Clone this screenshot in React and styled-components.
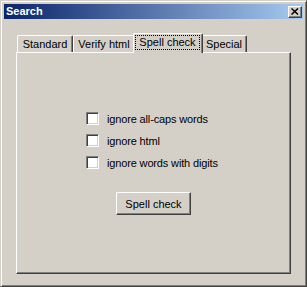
import React, { useState } from 'react';
import styled, { createGlobalStyle } from 'styled-components';

const GlobalStyle = createGlobalStyle`
  html, body {
    margin: 0;
    padding: 0;
    background: #d4d0c8;
  }
  body {
    font-family: "Liberation Sans", Arial, sans-serif;
    font-size: 11px;
    color: #000;
  }
`;

// outer dialog frame, classic 3d look
const Window = styled.div`
  box-sizing: border-box;
  width: 307px;
  height: 287px;
  background: #d4d0c8;
  border: 1px solid;
  border-color: #d4d0c8 #404040 #404040 #d4d0c8;
  box-shadow: inset 1px 1px #fff, inset -1px -1px #808080;
  padding: 3px;
  display: flex;
  flex-direction: column;
`;

const TitleBar = styled.div`
  height: 15px;
  display: flex;
  align-items: center;
  justify-content: space-between;
  padding: 0 1px 0 2px;
  background: linear-gradient(to right, #0a246a, #a6caf0);
`;

const Title = styled.span`
  color: #fff;
  font-weight: bold;
  font-size: 11px;
  line-height: 15px;
`;

const CloseButton = styled.button`
  box-sizing: border-box;
  width: 14px;
  height: 12px;
  padding: 0;
  background: #d4d0c8;
  border: 1px solid;
  border-color: #fff #404040 #404040 #fff;
  box-shadow: inset -1px -1px #808080;
  display: flex;
  align-items: center;
  justify-content: center;
`;

const Body = styled.div`
  flex: 1;
  display: flex;
  flex-direction: column;
  padding: 14px 12px 9px 12px;
`;

const TabRow = styled.div`
  display: flex;
  align-items: flex-start;
  height: 19px;
  padding-left: 1px;
  position: relative;
  z-index: 1;
`;

const Tab = styled.div`
  box-sizing: border-box;
  width: ${p => p.$w}px;
  height: ${p => (p.$active ? 20 : 17)}px;
  margin-top: ${p => (p.$active ? 0 : 2)}px;
  margin-left: ${p => (p.$active ? -2 : 0)}px;
  margin-right: ${p => (p.$active ? -2 : 0)}px;
  background: #d4d0c8;
  border-top: 1px solid #fff;
  border-left: 1px solid #fff;
  border-right: 1px solid #404040;
  border-radius: 2px 2px 0 0;
  box-shadow: inset -1px 0 #808080;
  display: flex;
  align-items: flex-start;
  justify-content: center;
  padding: ${p => (p.$active ? '1px 2px 0 1px' : '2px 0 0 0')};
  position: relative;
  z-index: ${p => (p.$active ? 2 : 1)};
  cursor: default;
`;

const TabLabel = styled.span`
  box-sizing: border-box;
  font-size: 11px;
  line-height: 13px;
  text-align: center;
  ${p => p.$focus && `
    width: 100%;
    padding: 1px 0;
    outline: 1px dotted #000;
    outline-offset: -1px;
  `}
`;

const Panel = styled.div`
  flex: 1;
  box-sizing: border-box;
  border: 1px solid;
  border-color: #fff #404040 #404040 #fff;
  box-shadow: inset -1px -1px #808080;
  display: flex;
  flex-direction: column;
  padding: 59px 0 0 69px;
`;

const Options = styled.div`
  display: flex;
  flex-direction: column;
  gap: 9px;
`;

const Option = styled.label`
  display: flex;
  align-items: center;
  gap: 8px;
  height: 13px;
  font-size: 11px;
  letter-spacing: -0.15px;
  cursor: default;
`;

const Box = styled.span`
  box-sizing: border-box;
  width: 13px;
  height: 13px;
  background: #fff;
  border: 1px solid;
  border-color: #808080 #fff #fff #808080;
  box-shadow: inset 1px 1px #404040, inset -1px -1px #d4d0c8;
  display: flex;
  align-items: center;
  justify-content: center;
`;

const PushButton = styled.button`
  box-sizing: border-box;
  width: 75px;
  height: 23px;
  margin: 23px 0 0 30px;
  background: #d4d0c8;
  border: 1px solid;
  border-color: #fff #404040 #404040 #fff;
  box-shadow: inset -1px -1px #808080;
  font-family: "Liberation Sans", Arial, sans-serif;
  font-size: 11px;
  color: #000;
  padding: 0;
`;

const tabs = [
  { label: 'Standard', w: 56 },
  { label: 'Verify html', w: 62 },
  { label: 'Spell check', w: 70 },
  { label: 'Special', w: 46 },
];

const options = ['ignore all-caps words', 'ignore html', 'ignore words with digits'];

export default function App() {
  const [active, setActive] = useState(2);
  const [checked, setChecked] = useState([false, false, false]);

  const toggle = i => setChecked(c => c.map((v, j) => (j === i ? !v : v)));

  return (
    <>
      <GlobalStyle />
      <Window>
        <TitleBar>
          <Title>Search</Title>
          <CloseButton aria-label="close">
            <svg width="8" height="7" viewBox="0 0 8 7">
              <path d="M0.5 0.5 L7 6.5 M7 0.5 L0.5 6.5" stroke="#000" strokeWidth="1.5" />
            </svg>
          </CloseButton>
        </TitleBar>
        <Body>
          <TabRow>
            {tabs.map((t, i) => (
              <Tab key={t.label} $w={t.w} $active={i === active} onClick={() => setActive(i)}>
                <TabLabel $focus={i === active}>{t.label}</TabLabel>
              </Tab>
            ))}
          </TabRow>
          <Panel>
            <Options>
              {options.map((o, i) => (
                <Option key={o} onClick={() => toggle(i)}>
                  <Box>
                    {checked[i] && (
                      <svg width="7" height="7" viewBox="0 0 7 7">
                        <path d="M0 3 L2 5 L7 0" stroke="#000" strokeWidth="1.5" fill="none" />
                      </svg>
                    )}
                  </Box>
                  {o}
                </Option>
              ))}
            </Options>
            <PushButton>Spell check</PushButton>
          </Panel>
        </Body>
      </Window>
    </>
  );
}
